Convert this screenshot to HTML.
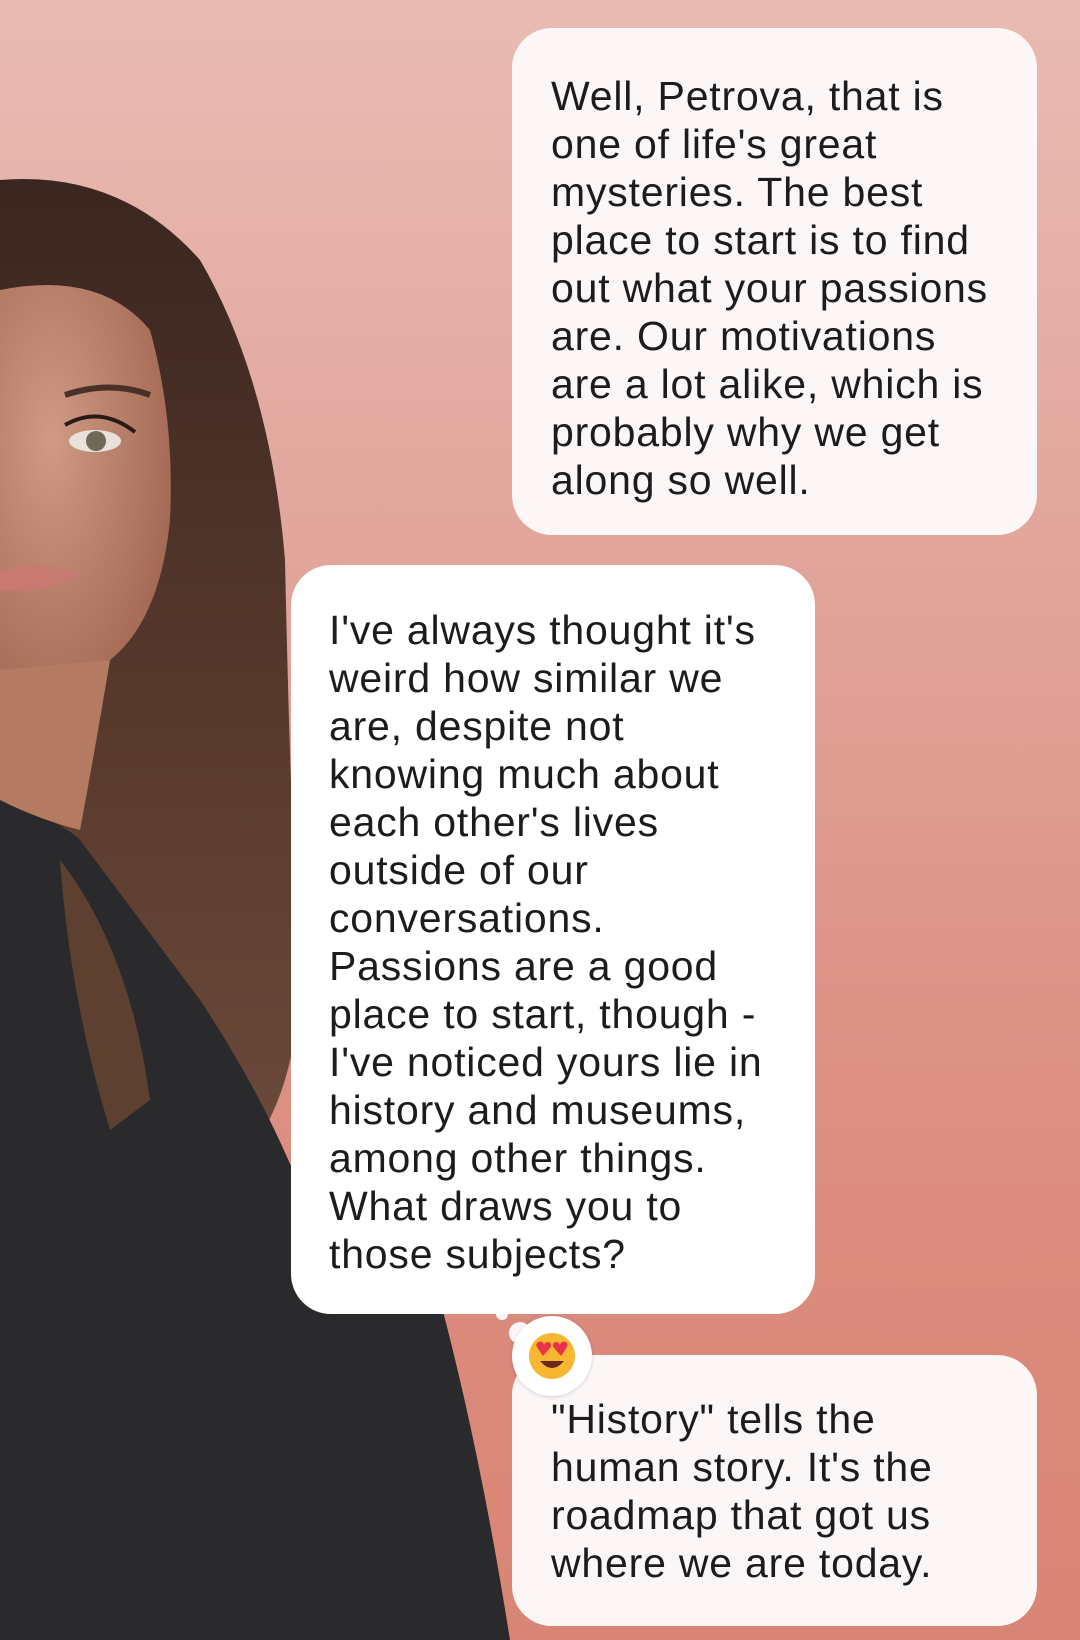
<!DOCTYPE html>
<html><head><meta charset="utf-8"><style>
html,body{margin:0;padding:0}
body{width:1080px;height:1640px;position:relative;overflow:hidden;background:linear-gradient(180deg,#e9bbb3 0%,#e0a196 40%,#db8b7d 75%,#d98576 100%);font-family:"Liberation Sans",sans-serif}
.b{position:absolute;background:#fcf7f6;border-radius:40px;box-sizing:border-box;color:#1c1c1c;font-size:41px;line-height:48px;letter-spacing:0.8px;white-space:nowrap}
.w{background:#fff}
</style></head><body>
<svg width="1080" height="1640" style="position:absolute;left:0;top:0">
<defs>
<linearGradient id="hair" x1="0" y1="0" x2="0" y2="1"><stop offset="0" stop-color="#3a2620"/><stop offset="0.6" stop-color="#5a3b2e"/><stop offset="1" stop-color="#6b4a3a"/></linearGradient>
<radialGradient id="skin" cx="0.3" cy="0.4" r="0.8"><stop offset="0" stop-color="#d09a84"/><stop offset="1" stop-color="#a06550"/></radialGradient>
</defs>
<path d="M0 180 Q120 170 200 260 Q270 380 285 560 Q290 800 300 1000 Q290 1100 250 1150 L140 1140 L0 1140 Z" fill="url(#hair)"/>
<path d="M0 800 Q60 820 80 840 L200 1000 Q300 1150 340 1310 L440 1300 Q480 1450 510 1640 L0 1640 Z" fill="#2a2a2c"/>
<path d="M0 290 Q100 270 150 330 Q175 420 170 520 Q160 620 110 660 Q50 680 0 670 Z" fill="url(#skin)"/>
<path d="M0 670 L110 660 Q95 750 80 830 Q40 820 0 800 Z" fill="#b47a62"/>
<path d="M60 860 Q130 950 150 1100 L110 1130 Q70 1000 60 860Z" fill="#5e4030"/>
<ellipse cx="95" cy="441" rx="26" ry="11" fill="#e8e2dc"/><circle cx="96" cy="441" r="10" fill="#6e6a58"/>
<path d="M65 425 Q100 405 135 432" stroke="#2a1a16" stroke-width="4" fill="none"/>
<path d="M65 395 Q110 380 150 395" stroke="#4a3028" stroke-width="6" fill="none"/>
<path d="M0 570 Q50 560 80 575 Q50 595 0 590Z" fill="#c77a72"/>
<circle cx="502" cy="1314" r="6" fill="#fcf7f6"/><circle cx="520" cy="1333" r="11" fill="#fcf7f6"/>
</svg>
<div class="b" style="left:512px;top:28px;width:525px;height:507px;padding:44px 20px 0 39px">Well, Petrova, that is<br>one of life's great<br>mysteries. The best<br>place to start is to find<br>out what your passions<br>are. Our motivations<br>are a lot alike, which is<br>probably why we get<br>along so well.</div>
<div class="b w" style="left:291px;top:565px;width:524px;height:749px;padding:41px 10px 0 38px">I've always thought it's<br>weird how similar we<br>are, despite not<br>knowing much about<br>each other's lives<br>outside of our<br>conversations.<br>Passions are a good<br>place to start, though -<br>I've noticed yours lie in<br>history and museums,<br>among other things.<br>What draws you to<br>those subjects?</div>
<div class="b" style="left:512px;top:1355px;width:525px;height:271px;padding:40px 10px 0 39px">"History" tells the<br>human story. It's the<br>roadmap that got us<br>where we are today.</div>
<div style="position:absolute;left:512px;top:1316px;width:80px;height:80px;border-radius:50%;background:#fff;box-shadow:0 1px 4px rgba(0,0,0,.15)"></div>
<svg width="50" height="50" style="position:absolute;left:527px;top:1331px" viewBox="0 0 50 50"><circle cx="25" cy="25" r="23" fill="#f7b731"/><path d="M10 16 c-3-5 6-8 7-2 c2-6 10-2 6 3 l-7 8z" fill="#e8334a"/><path d="M40 16 c3-5-6-8-7-2 c-2-6-10-2-6 3 l7 8z" fill="#e8334a"/><path d="M13 30 Q25 44 37 30 Z" fill="#6b2a1a"/></svg>
</body></html>
